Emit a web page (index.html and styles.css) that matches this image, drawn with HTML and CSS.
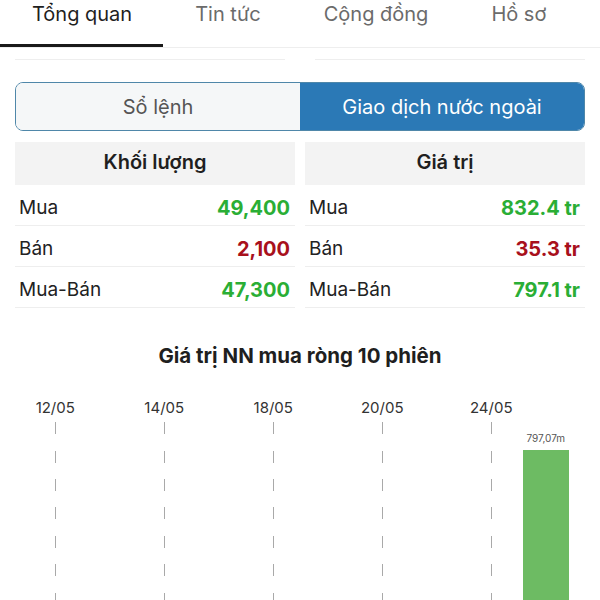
FILE: index.html
```html
<!DOCTYPE html>
<html lang="vi">
<head>
    <meta charset="UTF-8">
    <meta name="viewport" content="width=device-width, initial-scale=1.0">
    <title>Giao dịch nước ngoài</title>
    <link rel="stylesheet" href="styles.css">
</head>
<body>
    <div class="tabs">
        <div class="tab active">Tổng quan</div>
        <div class="tab">Tin tức</div>
        <div class="tab">Cộng đồng</div>
        <div class="tab">Hồ sơ</div>
    </div>
    <div class="prev-rows">
        <div class="prev-row"></div>
        <div class="prev-row"></div>
    </div>

    <div class="segmented">
        <div class="segment">Sổ lệnh</div>
        <div class="segment selected">Giao dịch nước ngoài</div>
    </div>

    <div class="stats">
        <div class="stats-col">
            <div class="stats-head">Khối lượng</div>
            <div class="stats-row"><span>Mua</span><span class="up">49,400</span></div>
            <div class="stats-row"><span>Bán</span><span class="down">2,100</span></div>
            <div class="stats-row"><span>Mua-Bán</span><span class="up">47,300</span></div>
        </div>
        <div class="stats-col">
            <div class="stats-head">Giá trị</div>
            <div class="stats-row"><span>Mua</span><span class="up">832.4 tr</span></div>
            <div class="stats-row"><span>Bán</span><span class="down">35.3 tr</span></div>
            <div class="stats-row"><span>Mua-Bán</span><span class="up">797.1 tr</span></div>
        </div>
    </div>

    <h3 class="chart-title">Giá trị NN mua ròng 10 phiên</h3>
    <div class="chart">
        <div class="slot"><div class="date">12/05</div><div class="dash"></div></div>
        <div class="slot"></div>
        <div class="slot"><div class="date">14/05</div><div class="dash"></div></div>
        <div class="slot"></div>
        <div class="slot"><div class="date">18/05</div><div class="dash"></div></div>
        <div class="slot"></div>
        <div class="slot"><div class="date">20/05</div><div class="dash"></div></div>
        <div class="slot"></div>
        <div class="slot"><div class="date">24/05</div><div class="dash"></div></div>
        <div class="slot">
            <div class="bar-value">797,07m</div>
            <div class="bar"></div>
        </div>
    </div>
</body>
</html>
```

FILE: styles.css
```css
html, body {
    height: 600px;
    overflow: hidden;
}
body {
    margin: 0;
    font-family: Inter, "Liberation Sans", sans-serif;
    background-color: #fff;
    color: #222;
}

/* tab bar */
.tabs {
    display: flex;
    border-bottom: 1px solid #eee;
}
.tab {
    height: 44px;
    padding: 0 31px 0 32px;
    font-size: 20px;
    line-height: 28px;
    color: #6b6b6b;
    border-bottom: 3px solid transparent;
}
.tab.active {
    color: #1f1f1f;
    border-bottom-color: #1a1a1a;
}
.prev-rows {
    display: flex;
    gap: 30px;
    padding: 0 15px;
}
.prev-row {
    flex: 1;
    height: 11px;
    border-bottom: 1px solid #eee;
}

/* segmented control */
.segmented {
    display: flex;
    margin: 22px 15px 0;
    height: 47px;
    border: 1px solid #4f87a9;
    border-radius: 8px;
    overflow: hidden;
}
.segment {
    flex: 1;
    display: flex;
    align-items: center;
    justify-content: center;
    font-size: 20px;
    background-color: #f5f7f8;
    color: #555;
}
.segment.selected {
    background-color: #2b79b6;
    color: #fff;
}

/* foreign trade stats */
.stats {
    display: flex;
    gap: 10px;
    margin: 11px 15px 0;
}
.stats-col {
    flex: 1;
}
.stats-head {
    height: 43px;
    display: flex;
    align-items: center;
    justify-content: center;
    padding-bottom: 3px;
    box-sizing: border-box;
    background-color: #f3f3f3;
    font-size: 20px;
    font-weight: 600;
    color: #1f1f1f;
}
.stats-row {
    display: flex;
    justify-content: space-between;
    align-items: center;
    box-sizing: border-box;
    height: 41px;
    padding: 5px 5px 0 4px;
    border-bottom: 1px solid #eee;
    font-size: 19px;
}
.up, .down {
    font-size: 20px;
    font-weight: 700;
}
.up {
    color: #2aae35;
}
.down {
    color: #a8101c;
}

/* chart */
.chart-title {
    margin: 36px 0 28px;
    text-align: center;
    font-size: 20.5px;
    line-height: 24px;
    font-weight: 700;
    color: #1f1f1f;
}
.chart {
    display: grid;
    grid-template-columns: repeat(10, 1fr);
    margin: 0 27px 0 28px;
    height: 240px;
}
.slot {
    display: flex;
    flex-direction: column;
    align-items: center;
}
.date {
    font-size: 15px;
    line-height: 24px;
    color: #333;
}
.dash {
    flex: 1;
    width: 1px;
    margin-top: 2px;
    background: repeating-linear-gradient(to bottom, #a9a9a9 0 12px, transparent 12px 28.5px);
}
.bar-value {
    margin: 35px 0 5px;
    font-size: 10px;
    line-height: 14px;
    color: #555;
}
.bar {
    flex: 1;
    width: 46px;
    background-color: #6dbb63;
}
```
